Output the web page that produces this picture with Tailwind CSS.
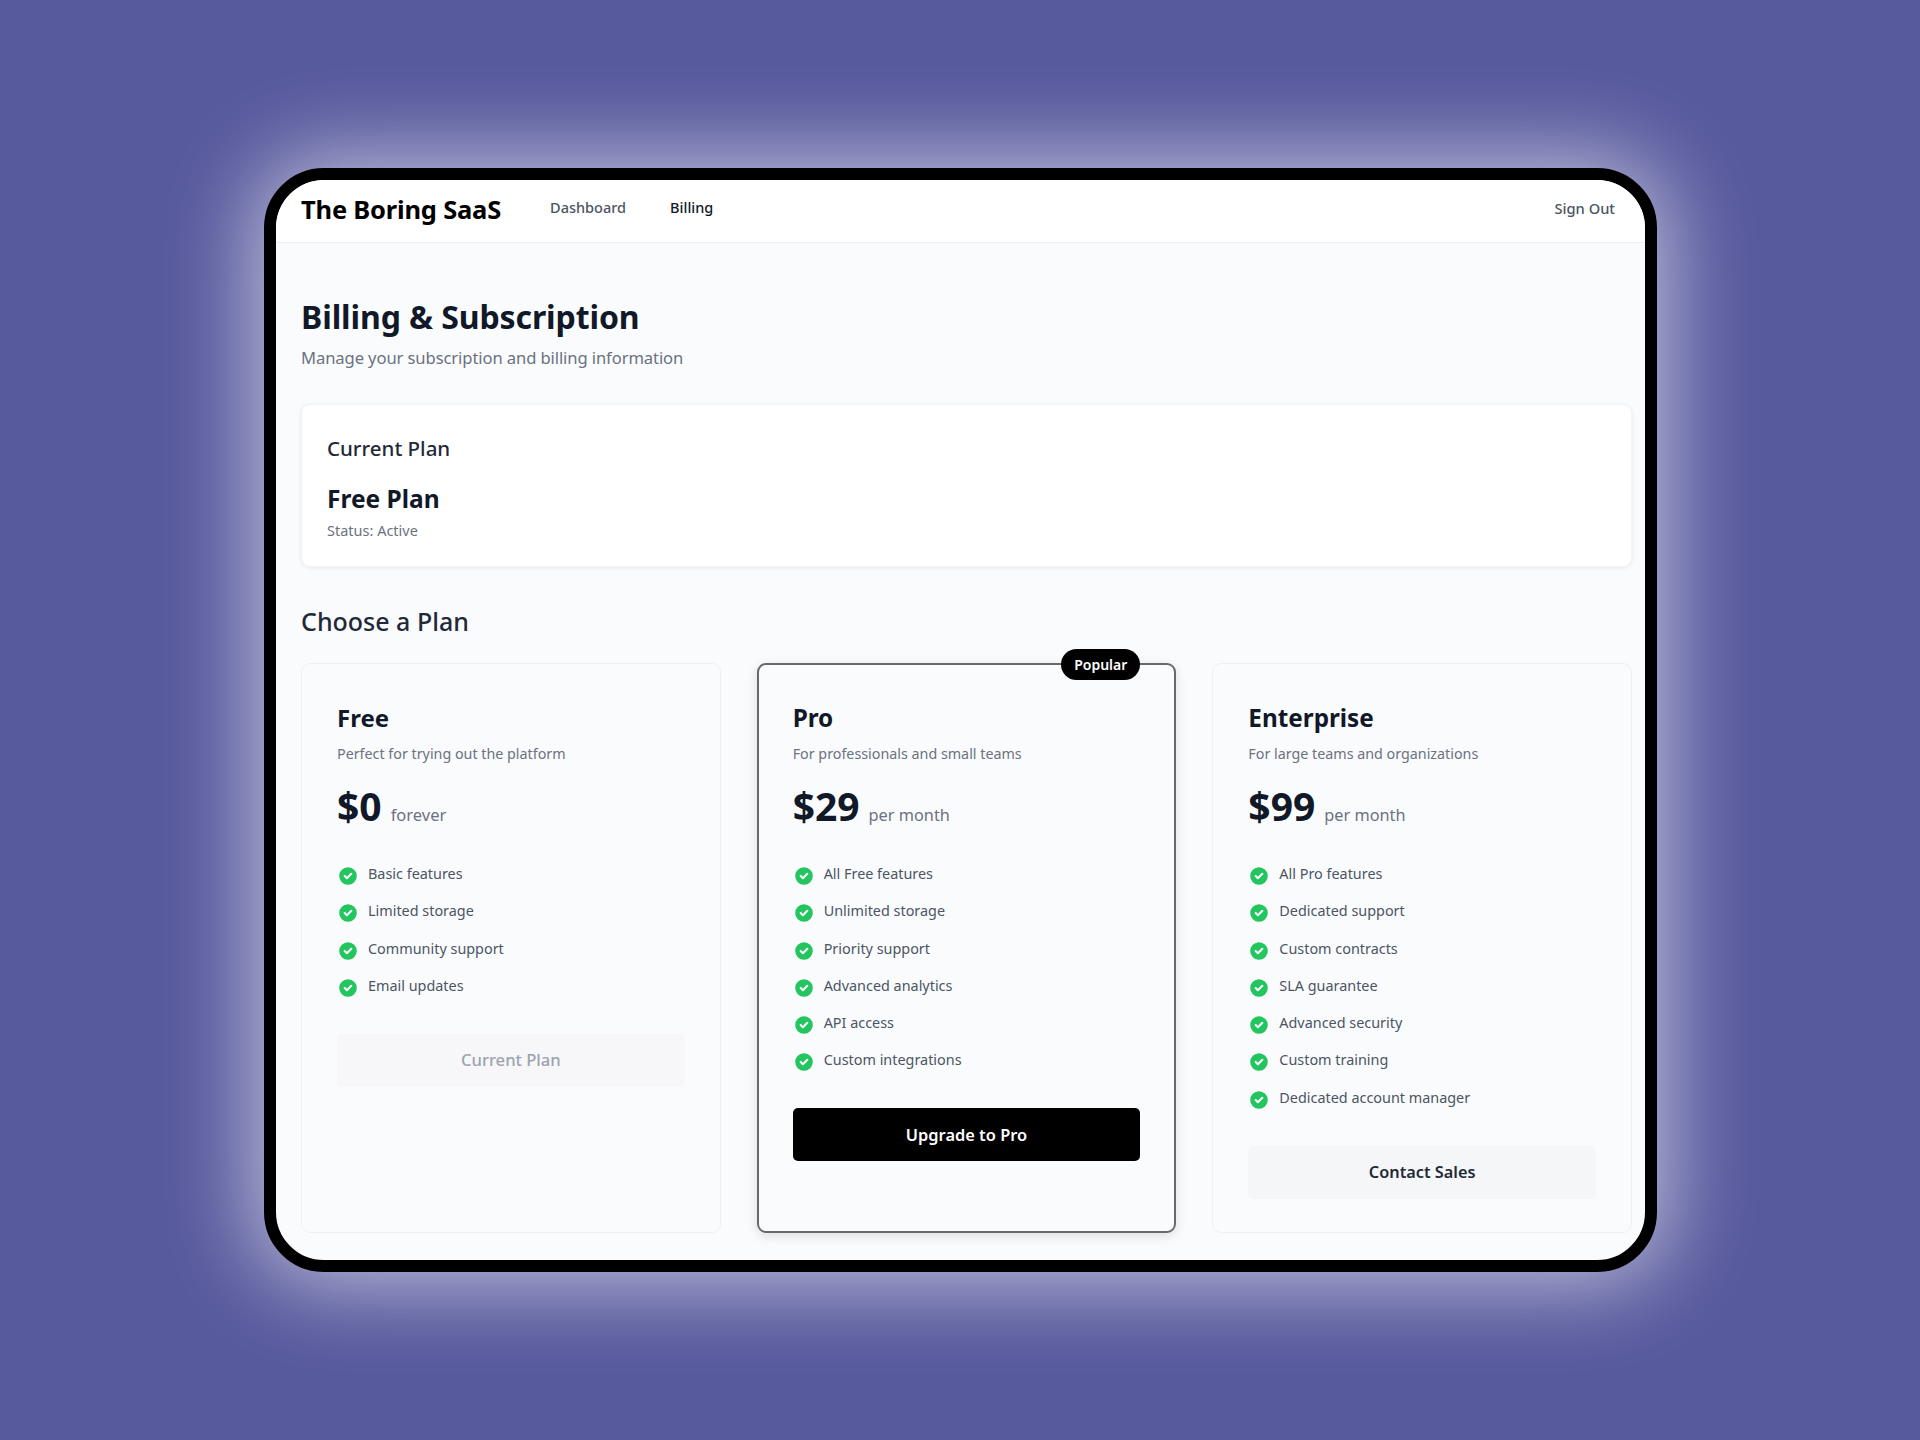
<!DOCTYPE html>
<html lang="en">
<head>
  <meta charset="UTF-8" />
  <title>The Boring SaaS - Billing</title>
  <script src="https://cdn.jsdelivr.net/npm/@tailwindcss/browser@4"></script>
</head>
<body class="w-[1920px] h-[1440px] bg-[#585a9e] font-['Noto_Sans',sans-serif] overflow-hidden pt-[168px] pl-[264px]">
  <div class="w-[1393px] h-[1104px] border-[12px] border-black rounded-[60px] bg-[#fafbfd] overflow-hidden shadow-[0_0_85px_12px_rgba(255,255,255,0.6)]">

    <!-- Nav -->
    <header class="h-[63px] bg-white border-b border-[#eceef1] pl-[25px] pr-[30px] pb-[4px] flex items-center">
      <span class="text-[25.5px] font-bold text-black tracking-[-0.2px]">The Boring SaaS</span>
      <nav class="flex gap-[44px] ml-[49px] mb-[2px] text-[14.5px] font-medium">
        <a class="text-[#4b5563]">Dashboard</a>
        <a class="text-[#111827]">Billing</a>
      </nav>
      <a class="ml-auto mb-[2px] text-[14.7px] font-medium text-[#4b5563]">Sign Out</a>
    </header>

    <main class="pl-[25px] pr-[13px] pt-[52px]">
      <h1 class="text-[32px] leading-[44px] font-bold text-[#111827] tracking-[-0.1px]">Billing &amp; Subscription</h1>
      <p class="mt-[7px] text-[16.6px] leading-[24px] text-[#6b7280] tracking-[-0.1px]">Manage your subscription and billing information</p>

      <!-- Current plan -->
      <section class="mt-[34px] h-[163px] bg-white rounded-[9px] border border-[#f3f4f6] shadow-[0_1px_4px_rgba(0,0,0,0.08)] px-[25px] pt-[28px]">
        <h2 class="text-[20.5px] leading-[30px] font-medium text-[#1f2937]">Current Plan</h2>
        <p class="mt-[20px] text-[24.5px] leading-[32px] font-bold text-[#111827]">Free Plan</p>
        <p class="mt-[5px] text-[14.5px] leading-[20px] text-[#6b7280]">Status: Active</p>
      </section>

      <h2 class="mt-[36px] text-[25px] leading-[36px] font-medium text-[#1f2937]">Choose a Plan</h2>

      <!-- Plans -->
      <div class="mt-[24px] grid grid-cols-3 gap-[36px] h-[570px]">

        <div class="rounded-[9px] border border-[#eff0f3] px-[35px] pt-[36px]">
          <h3 class="text-[24px] leading-[36px] font-bold text-[#111827]">Free</h3>
          <p class="mt-[7px] text-[14.3px] leading-[22px] text-[#6b7280]">Perfect for trying out the platform</p>
          <div class="mt-[12px] flex items-baseline gap-[9px] h-[48px]">
            <span class="text-[39px] font-bold text-[#111827]">$0</span>
            <span class="text-[16.5px] text-[#6b7280]">forever</span>
          </div>
          <ul class="mt-[38px] flex flex-col gap-[13.3px] text-[14.4px] leading-[22px] text-[#4b5563]">
            <li class="flex gap-[9px]"><svg class="w-[22px] h-[22px] mt-[2px] text-[#22c55e]" viewBox="0 0 20 20" fill="currentColor"><path fill-rule="evenodd" clip-rule="evenodd" d="M10 18a8 8 0 100-16 8 8 0 000 16zm3.707-9.293a1 1 0 00-1.414-1.414L9 10.586 7.707 9.293a1 1 0 00-1.414 1.414l2 2a1 1 0 001.414 0l4-4z"/></svg>Basic features</li>
            <li class="flex gap-[9px]"><svg class="w-[22px] h-[22px] mt-[2px] text-[#22c55e]" viewBox="0 0 20 20" fill="currentColor"><path fill-rule="evenodd" clip-rule="evenodd" d="M10 18a8 8 0 100-16 8 8 0 000 16zm3.707-9.293a1 1 0 00-1.414-1.414L9 10.586 7.707 9.293a1 1 0 00-1.414 1.414l2 2a1 1 0 001.414 0l4-4z"/></svg>Limited storage</li>
            <li class="flex gap-[9px]"><svg class="w-[22px] h-[22px] mt-[2px] text-[#22c55e]" viewBox="0 0 20 20" fill="currentColor"><path fill-rule="evenodd" clip-rule="evenodd" d="M10 18a8 8 0 100-16 8 8 0 000 16zm3.707-9.293a1 1 0 00-1.414-1.414L9 10.586 7.707 9.293a1 1 0 00-1.414 1.414l2 2a1 1 0 001.414 0l4-4z"/></svg>Community support</li>
            <li class="flex gap-[9px]"><svg class="w-[22px] h-[22px] mt-[2px] text-[#22c55e]" viewBox="0 0 20 20" fill="currentColor"><path fill-rule="evenodd" clip-rule="evenodd" d="M10 18a8 8 0 100-16 8 8 0 000 16zm3.707-9.293a1 1 0 00-1.414-1.414L9 10.586 7.707 9.293a1 1 0 00-1.414 1.414l2 2a1 1 0 001.414 0l4-4z"/></svg>Email updates</li>
          </ul>
          <button class="mt-[35px] w-full h-[53px] rounded-[5px] bg-[#f3f4f6]/50 text-[16.6px] font-medium text-[#9ca3af]">Current Plan</button>
        </div>

        <div class="relative rounded-[9px] border-2 border-[#666a70] shadow-[0_3px_12px_rgba(0,0,0,0.12)] px-[34px] pt-[35px]">
          <span class="absolute top-[-16px] right-[34px] h-[31px] px-[13px] rounded-full bg-black text-white text-[14px] font-semibold flex items-center">Popular</span>
          <h3 class="text-[24.3px] leading-[36px] font-bold text-[#111827]">Pro</h3>
          <p class="mt-[7px] text-[14.3px] leading-[22px] text-[#6b7280]">For professionals and small teams</p>
          <div class="mt-[12px] flex items-baseline gap-[9px] h-[48px]">
            <span class="text-[39px] font-bold text-[#111827]">$29</span>
            <span class="text-[16.3px] text-[#6b7280]">per month</span>
          </div>
          <ul class="mt-[38px] flex flex-col gap-[13.3px] text-[14.4px] leading-[22px] text-[#4b5563]">
            <li class="flex gap-[9px]"><svg class="w-[22px] h-[22px] mt-[2px] text-[#22c55e]" viewBox="0 0 20 20" fill="currentColor"><path fill-rule="evenodd" clip-rule="evenodd" d="M10 18a8 8 0 100-16 8 8 0 000 16zm3.707-9.293a1 1 0 00-1.414-1.414L9 10.586 7.707 9.293a1 1 0 00-1.414 1.414l2 2a1 1 0 001.414 0l4-4z"/></svg>All Free features</li>
            <li class="flex gap-[9px]"><svg class="w-[22px] h-[22px] mt-[2px] text-[#22c55e]" viewBox="0 0 20 20" fill="currentColor"><path fill-rule="evenodd" clip-rule="evenodd" d="M10 18a8 8 0 100-16 8 8 0 000 16zm3.707-9.293a1 1 0 00-1.414-1.414L9 10.586 7.707 9.293a1 1 0 00-1.414 1.414l2 2a1 1 0 001.414 0l4-4z"/></svg>Unlimited storage</li>
            <li class="flex gap-[9px]"><svg class="w-[22px] h-[22px] mt-[2px] text-[#22c55e]" viewBox="0 0 20 20" fill="currentColor"><path fill-rule="evenodd" clip-rule="evenodd" d="M10 18a8 8 0 100-16 8 8 0 000 16zm3.707-9.293a1 1 0 00-1.414-1.414L9 10.586 7.707 9.293a1 1 0 00-1.414 1.414l2 2a1 1 0 001.414 0l4-4z"/></svg>Priority support</li>
            <li class="flex gap-[9px]"><svg class="w-[22px] h-[22px] mt-[2px] text-[#22c55e]" viewBox="0 0 20 20" fill="currentColor"><path fill-rule="evenodd" clip-rule="evenodd" d="M10 18a8 8 0 100-16 8 8 0 000 16zm3.707-9.293a1 1 0 00-1.414-1.414L9 10.586 7.707 9.293a1 1 0 00-1.414 1.414l2 2a1 1 0 001.414 0l4-4z"/></svg>Advanced analytics</li>
            <li class="flex gap-[9px]"><svg class="w-[22px] h-[22px] mt-[2px] text-[#22c55e]" viewBox="0 0 20 20" fill="currentColor"><path fill-rule="evenodd" clip-rule="evenodd" d="M10 18a8 8 0 100-16 8 8 0 000 16zm3.707-9.293a1 1 0 00-1.414-1.414L9 10.586 7.707 9.293a1 1 0 00-1.414 1.414l2 2a1 1 0 001.414 0l4-4z"/></svg>API access</li>
            <li class="flex gap-[9px]"><svg class="w-[22px] h-[22px] mt-[2px] text-[#22c55e]" viewBox="0 0 20 20" fill="currentColor"><path fill-rule="evenodd" clip-rule="evenodd" d="M10 18a8 8 0 100-16 8 8 0 000 16zm3.707-9.293a1 1 0 00-1.414-1.414L9 10.586 7.707 9.293a1 1 0 00-1.414 1.414l2 2a1 1 0 001.414 0l4-4z"/></svg>Custom integrations</li>
          </ul>
          <button class="mt-[35px] w-full h-[53px] rounded-[5px] bg-black text-[16.4px] font-semibold text-white">Upgrade to Pro</button>
        </div>

        <div class="rounded-[9px] border border-[#eff0f3] px-[35px] pt-[36px]">
          <h3 class="text-[24.3px] leading-[36px] font-bold text-[#111827]">Enterprise</h3>
          <p class="mt-[7px] text-[14.3px] leading-[22px] text-[#6b7280]">For large teams and organizations</p>
          <div class="mt-[12px] flex items-baseline gap-[9px] h-[48px]">
            <span class="text-[39px] font-bold text-[#111827]">$99</span>
            <span class="text-[16.3px] text-[#6b7280]">per month</span>
          </div>
          <ul class="mt-[38px] flex flex-col gap-[13.3px] text-[14.4px] leading-[22px] text-[#4b5563]">
            <li class="flex gap-[9px]"><svg class="w-[22px] h-[22px] mt-[2px] text-[#22c55e]" viewBox="0 0 20 20" fill="currentColor"><path fill-rule="evenodd" clip-rule="evenodd" d="M10 18a8 8 0 100-16 8 8 0 000 16zm3.707-9.293a1 1 0 00-1.414-1.414L9 10.586 7.707 9.293a1 1 0 00-1.414 1.414l2 2a1 1 0 001.414 0l4-4z"/></svg>All Pro features</li>
            <li class="flex gap-[9px]"><svg class="w-[22px] h-[22px] mt-[2px] text-[#22c55e]" viewBox="0 0 20 20" fill="currentColor"><path fill-rule="evenodd" clip-rule="evenodd" d="M10 18a8 8 0 100-16 8 8 0 000 16zm3.707-9.293a1 1 0 00-1.414-1.414L9 10.586 7.707 9.293a1 1 0 00-1.414 1.414l2 2a1 1 0 001.414 0l4-4z"/></svg>Dedicated support</li>
            <li class="flex gap-[9px]"><svg class="w-[22px] h-[22px] mt-[2px] text-[#22c55e]" viewBox="0 0 20 20" fill="currentColor"><path fill-rule="evenodd" clip-rule="evenodd" d="M10 18a8 8 0 100-16 8 8 0 000 16zm3.707-9.293a1 1 0 00-1.414-1.414L9 10.586 7.707 9.293a1 1 0 00-1.414 1.414l2 2a1 1 0 001.414 0l4-4z"/></svg>Custom contracts</li>
            <li class="flex gap-[9px]"><svg class="w-[22px] h-[22px] mt-[2px] text-[#22c55e]" viewBox="0 0 20 20" fill="currentColor"><path fill-rule="evenodd" clip-rule="evenodd" d="M10 18a8 8 0 100-16 8 8 0 000 16zm3.707-9.293a1 1 0 00-1.414-1.414L9 10.586 7.707 9.293a1 1 0 00-1.414 1.414l2 2a1 1 0 001.414 0l4-4z"/></svg>SLA guarantee</li>
            <li class="flex gap-[9px]"><svg class="w-[22px] h-[22px] mt-[2px] text-[#22c55e]" viewBox="0 0 20 20" fill="currentColor"><path fill-rule="evenodd" clip-rule="evenodd" d="M10 18a8 8 0 100-16 8 8 0 000 16zm3.707-9.293a1 1 0 00-1.414-1.414L9 10.586 7.707 9.293a1 1 0 00-1.414 1.414l2 2a1 1 0 001.414 0l4-4z"/></svg>Advanced security</li>
            <li class="flex gap-[9px]"><svg class="w-[22px] h-[22px] mt-[2px] text-[#22c55e]" viewBox="0 0 20 20" fill="currentColor"><path fill-rule="evenodd" clip-rule="evenodd" d="M10 18a8 8 0 100-16 8 8 0 000 16zm3.707-9.293a1 1 0 00-1.414-1.414L9 10.586 7.707 9.293a1 1 0 00-1.414 1.414l2 2a1 1 0 001.414 0l4-4z"/></svg>Custom training</li>
            <li class="flex gap-[9px]"><svg class="w-[22px] h-[22px] mt-[2px] text-[#22c55e]" viewBox="0 0 20 20" fill="currentColor"><path fill-rule="evenodd" clip-rule="evenodd" d="M10 18a8 8 0 100-16 8 8 0 000 16zm3.707-9.293a1 1 0 00-1.414-1.414L9 10.586 7.707 9.293a1 1 0 00-1.414 1.414l2 2a1 1 0 001.414 0l4-4z"/></svg>Dedicated account manager</li>
          </ul>
          <button class="mt-[35px] w-full h-[53px] rounded-[5px] bg-[#f5f6f7] text-[16.3px] font-semibold text-[#1f2937]">Contact Sales</button>
        </div>
      </div>
    </main>
  </div>
</body>
</html>
